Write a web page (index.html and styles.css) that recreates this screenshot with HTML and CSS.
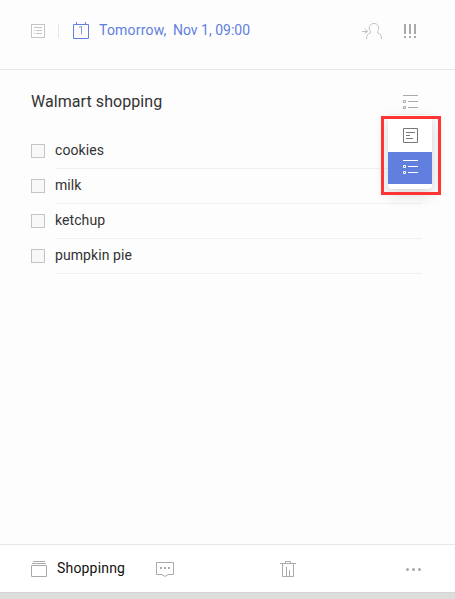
FILE: index.html
```html
<!DOCTYPE html>
<html lang="en">
<head>
<meta charset="utf-8">
<title>Walmart shopping</title>
<link rel="stylesheet" href="styles.css">
</head>
<body>
<div class="app">
  <header class="header">
    <svg class="icon icon-note" width="14" height="14" viewBox="0 0 14 14"><rect x=".5" y=".5" width="13" height="13"/><path d="M3 3.500h8M3 6.500h1M5 6.500h6M3 9.500h1M5 9.500h6"/></svg>
    <span class="divider"></span>
    <div class="date">
      <svg class="icon icon-calendar" width="16" height="17" viewBox="0 0 16 17"><path d="M.5 2.500h15v14H.5zM3.500 0v2M12.500 0v2"/><path class="numeral" d="M6 5.300l2.500-.8v8"/></svg>
      <span class="day">Tomorrow,</span>
      <span class="time">Nov 1, 09:00</span>
    </div>
    <svg class="icon icon-assign" width="20" height="16" viewBox="0 0 20 16"><path d="M0 8.500h5.500M2.500 5.500l3.200 3-3.200 2M4.500 16c0-3.500 1-5.500 4-6.300v-1.200C6.300 6.500 6.700.5 12 .5s5.700 6 3.500 8v1.200c3 .8 4 2.800 4 6.300"/></svg>
    <svg class="icon-priority" width="12" height="14" viewBox="0 0 12 14"><path d="M0 0h2v10H0zM5 0h2v10H5zM10 0h2v10h-2zM0 12h2v2H0zM5 12h2v2H5zM10 12h2v2h-2z"/></svg>
  </header>

  <main class="content">
    <div class="title-row">
      <h1 class="title">Walmart shopping</h1>
      <div class="mode">
        <svg class="icon icon-list" width="15" height="14" viewBox="0 0 15 14"><path d="M0 .5h15M.5 5.500h2v2h-2zM5 6.500h10M.5 11.500h2v2h-2zM5 12.500h10"/></svg>
        <div class="menu">
          <div class="menu-item">
            <svg class="icon" width="15" height="15" viewBox="0 0 15 15"><path d="M.5.5h14v14H.5zM3 4.500h9M3 7.500h4M3 10.500h7"/></svg>
          </div>
          <div class="menu-item selected">
            <svg class="icon icon-list" width="15" height="14" viewBox="0 0 15 14"><path d="M0 .5h15M.5 5.500h2v2h-2zM5 6.500h10M.5 11.500h2v2h-2zM5 12.500h10"/></svg>
          </div>
        </div>
        <div class="highlight"></div>
      </div>
    </div>
    <ul class="items">
      <li class="item"><span class="checkbox"></span><span class="label">cookies</span></li>
      <li class="item"><span class="checkbox"></span><span class="label">milk</span></li>
      <li class="item"><span class="checkbox"></span><span class="label">ketchup</span></li>
      <li class="item"><span class="checkbox"></span><span class="label">pumpkin pie</span></li>
    </ul>
  </main>

  <footer class="footer">
    <svg class="icon" width="16" height="16" viewBox="0 0 16 16"><path d="M2 .5h12M1 2.500h14M.5 4.500h15v11H.5z"/></svg>
    <span class="folder">Shoppinng</span>
    <svg class="icon icon-comment" width="18" height="16" viewBox="0 0 18 16"><path d="M6 12.500H.5V.5h17v12H12M6 12.500l3 2 3-2"/><path class="dots" d="M4 6h2M8 6h2M12 6h2"/></svg>
    <svg class="icon icon-trash" width="16" height="16" viewBox="0 0 16 16"><path d="M0 2.500h16M5.500 2V.5h5V2M2.500 3v12.500h11V3M6.500 6v9M9.500 9v6"/></svg>
    <svg class="icon-more" width="15" height="3" viewBox="0 0 15 3"><circle cx="1.500" cy="1.500" r="1.500"/><circle cx="7.500" cy="1.500" r="1.500"/><circle cx="13.500" cy="1.500" r="1.500"/></svg>
  </footer>
</div>
</body>
</html>
```
FILE: styles.css
```css
* { box-sizing: border-box; }

body {
  margin: 0;
  background: #ddd;
  color: #333;
  font: 14px/20px Roboto, sans-serif;
}

.app {
  display: flex;
  flex-direction: column;
  height: 599px;
  border-bottom: 7px solid #ddd;
  background: #fdfdfd;
}

svg { display: block; flex: none; }
.icon { fill: none; stroke: #aaa; stroke-width: 1; }

.header {
  display: flex;
  align-items: flex-start;
  height: 70px;
  padding: 24px 39px 0 31px;
  border-bottom: 1px solid #e8e8e8;
}
.icon-note { stroke: #c4c4c4; }
.divider { width: 1px; height: 14px; margin: 0 14px 0 13px; background: #e7e7e7; }
.date { display: flex; margin-top: -2px; color: #617fde; white-space: nowrap; }
.icon-calendar { margin-right: 10px; stroke: #617fde; }
.icon-calendar .numeral { stroke-opacity: .8; }
.day, .time { line-height: 16px; }
.day { width: 74px; letter-spacing: .2px; }
.icon-assign { margin: -1px 22px 0 auto; stroke: #c0c0c0; }
.icon-priority { fill: #aaa; }

.content { flex: 1; padding: 20px 33px 0 31px; }
.title-row { display: flex; justify-content: space-between; height: 43px; }
.title { margin: 0; font-size: 16px; font-weight: 400; line-height: 23px; letter-spacing: .07px; }
.mode { position: relative; width: 15px; height: 14px; margin: 5px 4px 0 0; }

.menu {
  position: absolute;
  top: 20px;
  left: -15px;
  width: 44px;
  height: 74px;
  padding: 5px 0;
  border-radius: 3px;
  background: #fff;
  box-shadow: 0 0 1px rgba(0, 0, 0, .16), 0 5px 15px rgba(0, 0, 0, .16);
}
.menu::before {
  content: "";
  position: absolute;
  top: -1px;
  left: 1px;
  right: 1px;
  height: 1px;
  background: #eee;
}
.menu-item { display: flex; justify-content: center; height: 32px; padding-top: 8px; }
.menu-item .icon { stroke: #777; }
.menu-item.selected { background: #617fde; }
.menu-item.selected .icon { stroke: #fff; }

.highlight {
  position: absolute;
  top: 21px;
  left: -22px;
  width: 60px;
  height: 79px;
  border: 3px solid #ff3434;
}

.items { margin: 0; padding: 0; list-style: none; }
.item { display: flex; height: 35px; }
.checkbox { width: 14px; height: 14px; margin: 11px 10px 0 0; border: 1px solid #c5c5c5; background: #f8f8f8; }
.label { flex: 1; height: 36px; padding-top: 7px; border-bottom: 1px solid #f0f0f0; letter-spacing: .08px; }

.footer {
  display: flex;
  align-items: center;
  height: 48px;
  padding: 1px 34px 0 31px;
  border-top: 1px solid #e7e7e7;
  background: #fff;
  color: #111;
  box-shadow: 0 1px 0 #d4d6d6;
}
.folder { width: 99px; padding-left: 10px; margin-bottom: 3px; letter-spacing: .18px; }
.icon-comment { margin: 1px 0 0 10px; }
.icon-comment .dots { stroke-width: 2; }
.icon-trash { margin-left: 106px; }
.icon-more { margin-left: auto; fill: #aaa; }
```
